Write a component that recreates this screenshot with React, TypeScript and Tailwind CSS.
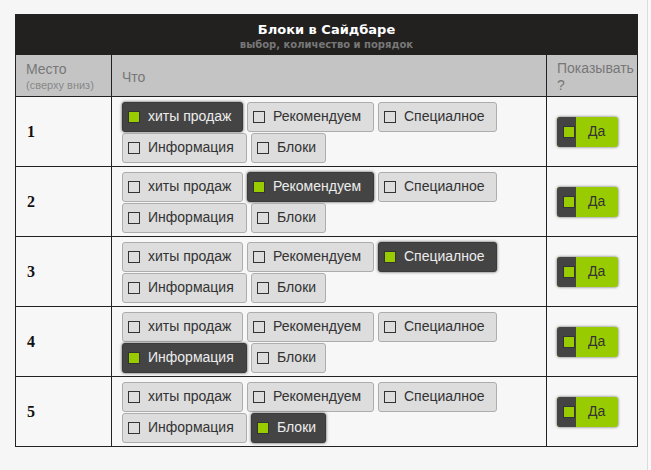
import React from 'react';

const blocks = [
  { label: 'хиты продаж', w: 'w-[121px]' },
  { label: 'Рекомендуем', w: 'w-[127px]' },
  { label: 'Специалное', w: 'w-[119px]' },
  { label: 'Информация', w: 'w-[125px]' },
  { label: 'Блоки', w: 'w-[75px]' },
];

const BlockButton: React.FC<{ label: string; w: string; active: boolean }> = ({ label, w, active }) => (
  <div
    className={`${w} h-[30px] flex items-center pl-[5px] rounded-[3px] border text-[14px] ${
      active
        ? 'bg-[#444444] border-[#3a3a3a] text-[#ececec] shadow-[0_0_3px_rgba(0,0,0,0.7)]'
        : 'bg-[#dddddd] border-[#adadad] text-[#333333]'
    }`}
  >
    <span
      className={`w-[12px] h-[12px] border shrink-0 ${
        active ? 'bg-[#99cc00] border-[#333333]' : 'border-[#333333]'
      }`}
    />
    <span className="ml-[8px] leading-[16px] -mt-[2px]">{label}</span>
  </div>
);

const Toggle: React.FC = () => (
  <div className="w-[61px] h-[30px] flex rounded-[3px] overflow-hidden bg-[#99cc00] shadow-[0_0_3px_rgba(0,0,0,0.6)]">
    <div className="w-[19px] bg-[#444444] flex items-center pl-[6px] shrink-0">
      <span className="w-[12px] h-[12px] bg-[#99cc00] border border-[#333333] shrink-0" />
    </div>
    <span className="ml-[12px] self-center -mt-[2px] text-[14px] leading-[16px] text-[#333333]">Да</span>
  </div>
);

export default function App() {
  return (
    <div className="w-[651px] h-[470px] flex bg-[#f6f6f6] font-['Liberation_Sans',Arial,sans-serif]">
      <div className="w-[647px] pt-[14px] pl-[15px]">
        <div className="w-[623px] border border-[#222222]">
          <div className="h-[40px] bg-[#222120] flex flex-col items-center pt-[7px] font-['DejaVu_Sans',sans-serif]">
            <div className="text-[13px] leading-[16px] font-bold text-white">Блоки в Сайдбаре</div>
            <div className="text-[10px] leading-[13px] font-bold text-[#777777]">выбор, количество и порядок</div>
          </div>
          <div className="grid grid-cols-[95px_1px_434px_1px_90px] h-[41px] bg-[#c4c4c4] text-[#777777]">
            <div className="pl-[10px] pt-[6px]">
              <div className="text-[14px] leading-[16px]">Место</div>
              <div className="text-[11px] leading-[13px] mt-[2px] text-[#888888]">(сверху вниз)</div>
            </div>
            <div className="bg-[#222222]" />
            <div className="pl-[10px] pt-[14px] text-[14px] leading-[16px]">Что</div>
            <div className="bg-[#222222]" />
            <div className="pl-[10px] pt-[5px] text-[14px] leading-[17px]">
              Показывать
              <br />?
            </div>
          </div>
          {[0, 1, 2, 3, 4].map((row) => (
            <div
              key={row}
              className="grid grid-cols-[95px_1px_434px_1px_90px] h-[70px] border-t border-[#222222] bg-[#f7f7f7]"
            >
              <div className="pl-[11px] flex items-center font-['Liberation_Serif',serif] font-bold text-[16px] text-[#111111]">
                {row + 1}
              </div>
              <div className="bg-[#222222]" />
              <div className="pl-[10px] pr-[10px] pt-[5px] flex flex-wrap content-start gap-x-[4px] gap-y-[1px]">
                {blocks.map((b, i) => (
                  <BlockButton key={b.label} label={b.label} w={b.w} active={i === row} />
                ))}
              </div>
              <div className="bg-[#222222]" />
              <div className="pl-[10px] flex items-center">
                <Toggle />
              </div>
            </div>
          ))}
        </div>
      </div>
      <div className="w-px bg-[#dcdcdc]" />
      <div className="flex-1 bg-[#fafafa]" />
    </div>
  );
}
